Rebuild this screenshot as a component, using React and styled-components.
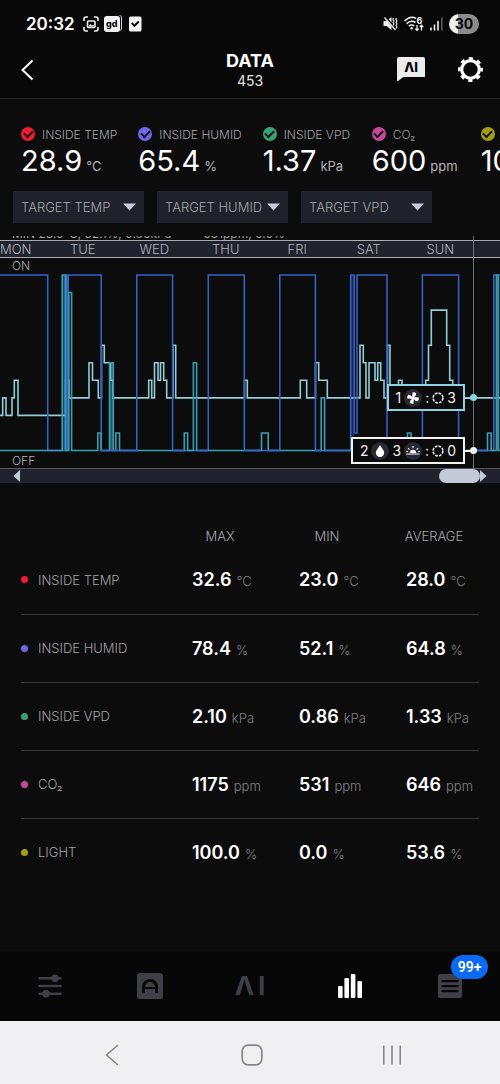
import React, { useState } from 'react';
import styled, { createGlobalStyle } from 'styled-components';

const GlobalStyle = createGlobalStyle`
  * {
    box-sizing: border-box;
  }

  body {
    margin: 0;
    background: #0c0c0c;
    color: #fff;
    font-family: Inter, 'Liberation Sans', sans-serif;
  }

  button, select {
    font-family: inherit;
    border: none;
    padding: 0;
    margin: 0;
    background: none;
    color: inherit;
    cursor: pointer;
  }
`;

const Page = styled.div`
  display: flex;
  flex-direction: column;
  min-height: 100vh;
  background: #0c0c0c;
  overflow: hidden;
`;

const Main = styled.main`
  flex: 1;
`;

/* ---------- status bar ---------- */

const StatusBar = styled.div`
  display: flex;
  justify-content: space-between;
  align-items: center;
  height: 47px;
  padding: 0 21px 0 26px;
  background: #080808;
`;

const StatusGroup = styled.div`
  display: flex;
  align-items: center;
  gap: ${props => props.$gap}px;
`;

const Clock = styled.span`
  font-size: 17px;
  font-weight: 600;
  margin-right: 3px;
`;

const AppBadge = styled.span`
  width: 16px;
  height: 16px;
  border-radius: 3px;
  background: #f4f4f4;
  color: #080808;
  font-size: 9px;
  font-weight: 800;
  line-height: 15px;
  text-align: center;
  box-shadow: 1px -1px 0 #080808, 2px -1px 0 #d0d0d0;
`;

const Battery = styled.span`
  width: 30px;
  height: 20px;
  border-radius: 10px;
  background: linear-gradient(90deg, #f0f0f0 30%, #8b8b8b 30%);
  color: #080808;
  font-size: 14px;
  font-weight: 700;
  line-height: 20px;
  text-align: center;
`;

/* ---------- header ---------- */

const Header = styled.header`
  display: grid;
  grid-template-columns: 1fr auto 1fr;
  align-items: center;
  height: 52px;
  padding: 0 16px 6px;
  background: #080808;
  border-bottom: 1px solid #262626;
`;

const IconButton = styled.button`
  display: flex;
  align-items: center;
`;

const BackButton = styled(IconButton)`
  padding-left: 4px;
`;

const TitleBlock = styled.div`
  text-align: center;
`;

const Title = styled.h1`
  margin: 0;
  font-size: 18px;
  font-weight: 700;
  line-height: 22px;
`;

const Subtitle = styled.div`
  font-size: 14px;
  line-height: 18px;
  color: #e4e4e4;
`;

const HeaderActions = styled.div`
  display: flex;
  justify-content: flex-end;
  align-items: center;
  gap: 32px;
`;

const ChatBubble = styled.span`
  width: 28px;
  height: 25px;
  padding-bottom: 5px;
  background: #ececec;
  border-radius: 2px;
  clip-path: polygon(0 0, 100% 0, 100% 80%, 22% 80%, 0 100%);
  color: #080808;
  font-size: 13px;
  font-weight: 800;
  line-height: 20px;
  text-align: center;
`;

/* ---------- sensors ---------- */

const SensorList = styled.div`
  display: flex;
  gap: 21px;
  padding: 26px 0 0 21px;
  overflow: hidden;
`;

const Sensor = styled.div`
  flex: none;
  min-width: 88px;
`;

const SensorLabel = styled.label`
  display: flex;
  align-items: center;
  gap: 7px;
  height: 18px;
  color: #a2a2a8;
  font-size: 12px;
  font-weight: 300;
`;

const SensorCheck = styled.input`
  appearance: none;
  display: grid;
  place-items: center;
  width: 14px;
  height: 14px;
  margin: 0;
  border-radius: 50%;
  background: ${props => props.$color};

  &:checked::after {
    content: '';
    width: 7px;
    height: 4px;
    margin-bottom: 2px;
    border: solid #141414;
    border-width: 0 0 2px 2px;
    transform: rotate(-45deg);
  }
`;

const SensorValue = styled.div`
  display: flex;
  align-items: baseline;
  gap: 4px;
  height: 36px;
  font-size: 29px;
  font-weight: 400;
  line-height: 36px;
`;

const SensorUnit = styled.span`
  font-size: 13px;
  line-height: 16px;
  color: #b4b4b8;
`;

const Filters = styled.div`
  display: flex;
  gap: 13px;
  padding: 12px 13px 13px;
`;

const FilterBox = styled.div`
  display: grid;
  grid-template-columns: 1fr 13px;
  align-items: center;
  width: 131px;
  height: 32px;
  padding-right: 8px;
  background: #1f212b;
`;

const FilterSelect = styled.select`
  appearance: none;
  grid-area: 1 / 1 / 2 / 3;
  height: 32px;
  padding: 0 0 0 8px;
  font-size: 13px;
  font-weight: 300;
  color: #a6a6ac;
  outline: none;
`;

const Caret = styled.svg`
  grid-area: 1 / 2 / 2 / 3;
  pointer-events: none;
`;

/* ---------- chart ---------- */

const ChartPanel = styled.section`
  position: relative;
`;

const SummaryStrip = styled.div`
  display: flex;
  align-items: flex-end;
  gap: 32px;
  height: 4px;
  padding-left: 12px;
  overflow: hidden;
  font-size: 12px;
  line-height: 13px;
  color: #a0a0a0;
  white-space: nowrap;
`;

const DayRow = styled.div`
  display: grid;
  grid-template-columns: 94fr repeat(6, 143fr) 48fr;
  height: 18px;
  border: solid #a9abb3;
  border-width: 1px 0;
  background: #20222d;
  color: #b4b5bc;
  font-size: 13px;
  font-weight: 300;
  line-height: 16px;
  text-align: center;

  span:first-child {
    text-align: left;
  }
`;

const Plot = styled.div`
  display: grid;
  height: 210px;
`;

const PlotSvg = styled.svg`
  grid-area: 1 / 1;
  width: 100%;
  height: 210px;
`;

const PlotScale = styled.div`
  grid-area: 1 / 1;
  display: flex;
  flex-direction: column;
  justify-content: space-between;
  padding-left: 12px;
  color: #b4b4b4;
  font-size: 12px;
  font-weight: 300;
  line-height: 15px;
`;

const Cursor = styled.div`
  position: absolute;
  top: 0;
  bottom: 14px;
  right: 26px;
  width: 1px;
  background: #6f7075;
`;

const Readout = styled.div`
  position: absolute;
  top: ${props => props.$top}px;
  right: -3px;
  display: flex;
  align-items: center;
  color: ${props => props.$color};

  /* lead line to the cursor */
  &::after {
    content: '';
    order: 1;
    width: 5px;
    height: 2px;
    background: currentColor;
  }
`;

const ReadoutBox = styled.div`
  display: flex;
  align-items: center;
  gap: 3px;
  height: 27px;
  padding: 0 7px;
  border: 2px solid currentColor;
  background: #0b0b0b;

  span {
    color: #f2f2f2;
    font-size: 14px;
  }
`;

const ReadoutDot = styled.i`
  order: 2;
  width: 7px;
  height: 7px;
  border-radius: 50%;
  background: currentColor;
`;

const Track = styled.div`
  display: flex;
  align-items: center;
  justify-content: space-between;
  height: 15px;
  padding: 0 13px;
  border-top: 1px solid #55565b;
  background: #20222d;
`;

const ThumbGroup = styled.div`
  display: flex;
  align-items: center;
`;

const Thumb = styled.div`
  width: 41px;
  height: 14px;
  border-radius: 7px;
  background: #c3cbd9;
`;

/* ---------- statistics ---------- */

const StatsWrap = styled.section`
  padding: 43px 21px 0;
`;

const StatsTable = styled.table`
  width: 100%;
  table-layout: fixed;
  border-collapse: collapse;

  tbody tr {
    height: 68px;
  }

  tbody tr + tr {
    border-top: 1px solid #363636;
  }
`;

const StatCol = styled.col`
  width: ${props => props.$width}px;
`;

const StatHead = styled.th`
  height: 20px;
  padding: 0;
  color: #a8a8ac;
  font-size: 13px;
  font-weight: 300;
  line-height: 20px;
  text-align: left;

  span {
    display: inline-block;
    width: 68px;
    text-align: center;
  }
`;

const StatName = styled.th`
  padding: 0;
  color: #a2a2a6;
  font-size: 13px;
  font-weight: 300;
  text-align: left;
`;

const StatLabel = styled.div`
  display: flex;
  align-items: center;
  gap: 10px;

  &::before {
    content: '';
    width: 7px;
    height: 7px;
    border-radius: 50%;
    background: ${props => props.$color};
  }
`;

const StatCell = styled.td`
  padding: 0 0 0 6px;
  font-size: 18px;
  font-weight: 600;
  white-space: nowrap;
`;

const StatUnit = styled.span`
  margin-left: 5px;
  color: #828286;
  font-size: 13px;
  font-weight: 300;
`;

/* ---------- bottom bars ---------- */

const TabBar = styled.nav`
  display: grid;
  grid-template-columns: repeat(5, 1fr);
  height: 70px;
  background: #070707;
`;

const Tab = styled.button`
  display: flex;
  align-items: center;
  justify-content: center;
  color: ${props => (props.$active ? '#fff' : '#3f3f47')};
`;

const AutoIcon = styled.span`
  display: grid;
  place-items: center;
  width: 26px;
  height: 26px;
  border-radius: 3px;
  background: currentColor;
`;

/* arch with a cross bar */
const Arch = styled.span`
  width: 16px;
  height: 14px;
  padding-top: 5px;
  border: 3px solid #070707;
  border-bottom: none;
  border-radius: 8px 8px 0 0;

  &::after {
    content: '';
    display: block;
    height: 2px;
    background: #070707;
  }
`;

const AiMark = styled.span`
  display: flex;
  gap: 4px;
  font-size: 26px;
  font-weight: 700;
  line-height: 26px;
`;

const BadgeHolder = styled.span`
  position: relative;
  display: flex;
`;

const Badge = styled.span`
  position: absolute;
  left: 13px;
  bottom: 19px;
  width: 37px;
  height: 24px;
  border-radius: 12px;
  background: #0a69f5;
  color: #fff;
  font-family: Roboto, sans-serif;
  font-size: 14px;
  font-weight: 600;
  line-height: 24px;
  text-align: center;
`;

const SystemNav = styled.nav`
  display: grid;
  grid-template-columns: repeat(3, 1fr);
  height: 63px;
  padding: 4px 38px 0 42px;
  background: #f0f0f2;
  color: #87878a;
`;

const SystemButton = styled.button`
  display: flex;
  align-items: center;
  justify-content: center;
`;

const sensors = [
  { name: 'INSIDE TEMP', value: '28.9', unit: '°C', color: '#ee1c2e', max: '32.6', min: '23.0', avg: '28.0' },
  { name: 'INSIDE HUMID', value: '65.4', unit: '%', color: '#6f66e8', max: '78.4', min: '52.1', avg: '64.8' },
  { name: 'INSIDE VPD', value: '1.37', unit: 'kPa', color: '#38a078', max: '2.10', min: '0.86', avg: '1.33' },
  { name: 'CO₂', value: '600', unit: 'ppm', color: '#c4489a', max: '1175', min: '531', avg: '646' },
  { name: 'LIGHT', value: '100.0', unit: '%', color: '#a29d16', max: '100.0', min: '0.0', avg: '53.6' },
];

const filters = ['TARGET TEMP', 'TARGET HUMID', 'TARGET VPD'];

const days = ['MON', 'TUE', 'WED', 'THU', 'FRI', 'SAT', 'SUN'];

// [x where the level starts, level 0-10]
const fanSteps = [
  [0, 2], [2.7, 3], [6, 2], [12, 3], [14.3, 4], [18, 2], [65.5, 4], [69, 3],
  [89, 5], [92.5, 4], [98.3, 3], [101.5, 6], [104.3, 5], [110.5, 4], [113, 3],
  [148.7, 4], [151.7, 3], [154.5, 5], [158, 4], [160.5, 5], [163.7, 4], [166.7, 3],
  [173, 6], [175.7, 3], [244.5, 4], [247.3, 3], [300.3, 4], [306.7, 3],
  [315.5, 5], [318.7, 4], [327.3, 3], [360, 6], [363.3, 5], [366, 3], [369, 5],
  [375, 4], [377.7, 5], [380.7, 4], [384, 3], [387.5, 6], [390, 3], [398.5, 4],
  [402, 3], [425.7, 4], [428.5, 6], [431.3, 8], [446.7, 6], [449.7, 4], [452.7, 3],
];

const mistSteps = [
  [0, 0], [62.2, 10], [65.5, 0], [68.8, 9], [71.6, 0], [97.8, 1], [101, 0],
  [109.5, 5], [113.3, 0], [115.8, 1], [119.5, 0], [184.3, 1], [187.6, 0],
  [193.4, 5], [196.6, 0], [261.5, 1], [268.2, 0], [321.2, 3], [324.6, 0],
  [407.5, 1], [411, 0], [487.5, 1], [491.2, 0], [496.4, 10], [498.4, 0],
];

const lightSteps = [
  [0, 10], [47.7, 0], [65.5, 10], [66.6, 0], [68.2, 10], [101.2, 0], [136.8, 10],
  [172.6, 0], [208.3, 10], [244.3, 0], [279.8, 10], [315.4, 0], [350.7, 10],
  [354.2, 1], [357, 10], [387, 0], [422.4, 10], [458.6, 0], [493.8, 10],
];

const toPath = steps =>
  steps
    .map(([x, level], i) => {
      const y = 192.5 - level * 17.55;
      return i === 0 ? `M${x} ${y}` : `H${x}V${y}`;
    })
    .join('') + 'H502';

const FanIcon = () => (
  <svg width="18" height="18" viewBox="0 0 18 18">
    <circle cx="9" cy="9" r="9" fill="#272832" />
    <g fill="#fff">
      {[0, 90, 180, 270].map(angle => (
        <path key={angle} d="M8.2 9.8L7.6 3.4Q9.4 2.6 11.4 3.8Q11.6 6.4 9.8 8.2Z" transform={`rotate(${angle + 10} 9 9)`} />
      ))}
    </g>
  </svg>
);

const DropIcon = () => (
  <svg width="18" height="18" viewBox="0 0 18 18">
    <circle cx="9" cy="9" r="9" fill="#272832" />
    <path d="M9 3C10.2 5.6 13.2 8.2 13.2 10.8A4.2 4.2 0 0 1 4.8 10.8C4.8 8.2 7.8 5.6 9 3Z" fill="#fff" />
  </svg>
);

const SunriseIcon = () => (
  <svg width="18" height="18" viewBox="0 0 18 18">
    <circle cx="9" cy="9" r="9" fill="#272832" />
    <path d="M5.8 11A3.2 3.2 0 0 1 12.2 11Z" fill="#fff" />
    <path d="M2.5 12H15.5M9 6.2V4M5.4 7.6L4 6.2M12.6 7.6L14 6.2M3.8 9.8L2 9.3M14.2 9.8L16 9.3" stroke="#fff" strokeWidth="1.1" />
  </svg>
);

const DialIcon = () => (
  <svg width="12" height="12" viewBox="0 0 12 12">
    <circle cx="6" cy="6" r="4.9" fill="none" stroke="#eee" strokeWidth="1.6" strokeDasharray="2.7 1.148" />
  </svg>
);

const GearIcon = () => (
  <svg width="27" height="27" viewBox="0 0 27 27" fill="none" stroke="#fff">
    <circle cx="13.5" cy="13.5" r="8.8" strokeWidth="3.2" />
    <circle cx="13.5" cy="13.5" r="11.1" strokeWidth="2.6" strokeDasharray="4.2 4.518" strokeDashoffset="2.1" />
  </svg>
);

function App() {
  const [enabled, setEnabled] = useState(sensors.map(() => true));

  const toggle = index => {
    setEnabled(enabled.map((on, i) => (i === index ? !on : on)));
  };

  return (
    <Page>
      <GlobalStyle />

      <StatusBar>
        <StatusGroup $gap={5}>
          <Clock>20:32</Clock>
          <svg width="16" height="16" viewBox="0 0 16 16" fill="none" stroke="#eee" strokeWidth="1.6">
            <path d="M1 5V3Q1 1 3 1H5M11 1H13Q15 1 15 3V5M15 11V13Q15 15 13 15H11M5 15H3Q1 15 1 13V11" />
            <rect x="4.5" y="5" width="7.5" height="6.5" rx="1" />
            <path d="M5 10.5L7.5 8L9 9.5L10 8.8L12 10.5Z" fill="#eee" stroke="none" />
          </svg>
          <AppBadge>gd</AppBadge>
          <svg width="20" height="16" viewBox="0 0 20 16">
            <rect x="4" y="0.5" width="12.5" height="15" rx="1.5" fill="#f4f4f4" />
            <path d="M6.8 7L9.4 9.8L13.8 5.5" fill="none" stroke="#080808" strokeWidth="1.9" />
          </svg>
        </StatusGroup>
        <StatusGroup $gap={6}>
          <svg width="15" height="15" viewBox="0 0 15 15">
            <path d="M0.5 5H3.5L8.5 1V14L3.5 10H0.5Z" fill="#f0f0f0" />
            <path d="M1.5 0.5L13 13.5" stroke="#080808" strokeWidth="2.6" />
            <path d="M1.5 1.5L12.5 14" stroke="#f0f0f0" strokeWidth="1.3" />
            <path d="M10.5 2L9.8 3.5L11 5L10 6.5L11 8L10 9.5M13.5 2L12.8 3.5L14 5L13 6.5L14 8L13 9.5L14 11L13 12.5" fill="none" stroke="#f0f0f0" strokeWidth="1.1" />
          </svg>
          <svg width="20" height="16" viewBox="0 0 20 16" fill="none" stroke="#f0f0f0" strokeWidth="1.5">
            <path d="M0.5 5Q6.5 -1 12 2.5M2.6 7.6Q7 3.6 11.5 6.5M4.8 10.2Q7.5 8 10.3 10" />
            <circle cx="7.6" cy="12.2" r="1.2" fill="#f0f0f0" stroke="none" />
            <path d="M13 9V14M11.3 12.6L13 14.4L14.7 12.6M17.5 14.6V9.6M15.8 11L17.5 9.2L19.2 11" strokeWidth="1.3" />
            <text x="12.4" y="8" fill="#f0f0f0" stroke="none" fontSize="9" fontWeight="700">6</text>
          </svg>
          <svg width="13" height="14" viewBox="0 0 13 14">
            <path d="M1 10.5V13.5M4.5 7.5V13.5M8 4V13.5" stroke="#f0f0f0" strokeWidth="1.6" />
            <path d="M11.8 0.5V13.5" stroke="#5a5a5a" strokeWidth="1.6" />
          </svg>
          <Battery>30</Battery>
        </StatusGroup>
      </StatusBar>

      <Header>
        <BackButton aria-label="Back">
          <svg width="14" height="22" viewBox="0 0 14 22" fill="none" stroke="#fff" strokeWidth="2">
            <path d="M12.5 1.5L2.5 11L12.5 20.5" />
          </svg>
        </BackButton>
        <TitleBlock>
          <Title>DATA</Title>
          <Subtitle>453</Subtitle>
        </TitleBlock>
        <HeaderActions>
          <IconButton>
            <ChatBubble>ΛI</ChatBubble>
          </IconButton>
          <IconButton aria-label="Settings">
            <GearIcon />
          </IconButton>
        </HeaderActions>
      </Header>

      <Main>
        <SensorList>
          {sensors.map((sensor, i) => (
            <Sensor key={sensor.name}>
              <SensorLabel>
                <SensorCheck type="checkbox" $color={sensor.color} checked={enabled[i]} onChange={() => toggle(i)} />
                {sensor.name}
              </SensorLabel>
              <SensorValue>
                {sensor.value}
                <SensorUnit>{sensor.unit}</SensorUnit>
              </SensorValue>
            </Sensor>
          ))}
        </SensorList>

        <Filters>
          {filters.map(name => (
            <FilterBox key={name}>
              <FilterSelect aria-label={name}>
                <option>{name}</option>
              </FilterSelect>
              <Caret width="13" height="8" viewBox="0 0 13 8">
                <path d="M0 0.5H13L6.5 7.5Z" fill="#c9cbdc" />
              </Caret>
            </FilterBox>
          ))}
        </Filters>

        <ChartPanel>
          <SummaryStrip>
            <span>MIN 23.0°C, 52.1%, 0.86kPa</span>
            <span>531ppm, 0.0%</span>
          </SummaryStrip>
          <DayRow>
            {days.map(day => (
              <span key={day}>{day}</span>
            ))}
          </DayRow>
          <Plot>
            <PlotSvg viewBox="0 0 500 210" preserveAspectRatio="none" fill="none" strokeWidth="1.6">
              <rect x="62.2" y="17" width="3.3" height="175" fill="#174a55" />
              <rect x="65.5" y="122" width="2.7" height="70" fill="#1f4f9c" />
              <rect x="109.5" y="105" width="3.8" height="87" fill="#1c5a68" />
              <rect x="350.7" y="17" width="3.5" height="175" fill="#14264d" />
              <rect x="496.4" y="17" width="2" height="175" fill="#1f6f80" />
              <path d={toPath(fanSteps)} stroke="#93ccd6" />
              <path d={toPath(lightSteps)} stroke="#3560c4" />
              <path d={toPath(mistSteps)} stroke="#3a9db2" />
              <path d="M101 192.5H137M172.6 192.5H184M197 192.5H208M244 192.5H261M268 192.5H280M315 192.5H321M325 192.5H351M473 192.5H487" stroke="#3560c4" />
            </PlotSvg>
            <PlotScale>
              <span>ON</span>
              <span>OFF</span>
            </PlotScale>
          </Plot>
          <Track>
            <svg width="7" height="12" viewBox="0 0 7 12">
              <path d="M7 0V12L0.5 6Z" fill="#c3cbd9" />
            </svg>
            <ThumbGroup>
              <Thumb />
              <svg width="7" height="12" viewBox="0 0 7 12">
                <path d="M0 0V12L6.5 6Z" fill="#c3cbd9" />
              </svg>
            </ThumbGroup>
          </Track>
          <Cursor>
            <Readout $top={148} $color="#8fd3e2">
              <ReadoutBox>
                <span>1</span>
                <FanIcon />
                <span>:</span>
                <DialIcon />
                <span>3</span>
              </ReadoutBox>
              <ReadoutDot />
            </Readout>
            <Readout $top={201} $color="#f4f4ee">
              <ReadoutBox>
                <span>2</span>
                <DropIcon />
                <span>3</span>
                <SunriseIcon />
                <span>:</span>
                <DialIcon />
                <span>0</span>
              </ReadoutBox>
              <ReadoutDot />
            </Readout>
          </Cursor>
        </ChartPanel>

        <StatsWrap>
          <StatsTable>
            <colgroup>
              <col />
              <StatCol $width={107} />
              <StatCol $width={107} />
              <StatCol $width={79} />
            </colgroup>
            <thead>
              <tr>
                <StatHead />
                <StatHead scope="col"><span>MAX</span></StatHead>
                <StatHead scope="col"><span>MIN</span></StatHead>
                <StatHead scope="col"><span>AVERAGE</span></StatHead>
              </tr>
            </thead>
            <tbody>
              {sensors.map(sensor => (
                <tr key={sensor.name}>
                  <StatName scope="row">
                    <StatLabel $color={sensor.color}>{sensor.name}</StatLabel>
                  </StatName>
                  {[sensor.max, sensor.min, sensor.avg].map((value, i) => (
                    <StatCell key={i}>
                      {value}
                      <StatUnit>{sensor.unit}</StatUnit>
                    </StatCell>
                  ))}
                </tr>
              ))}
            </tbody>
          </StatsTable>
        </StatsWrap>
      </Main>

      <TabBar>
        <Tab aria-label="Controls">
          <svg width="24" height="24" viewBox="0 0 24 24" stroke="currentColor" strokeWidth="2.6" strokeLinecap="round">
            <path d="M1.5 4.2H22.5M1.5 12H22.5M1.5 19.8H22.5" />
            <circle cx="17" cy="4.2" r="3" fill="currentColor" strokeWidth="1.6" />
            <circle cx="8" cy="19.8" r="3" fill="currentColor" strokeWidth="1.6" />
          </svg>
        </Tab>
        <Tab aria-label="Automation">
          <AutoIcon>
            <Arch />
          </AutoIcon>
        </Tab>
        <Tab>
          <AiMark>
            <span>Λ</span>
            <span>I</span>
          </AiMark>
        </Tab>
        <Tab $active aria-label="Data">
          <svg width="26" height="26" viewBox="0 0 26 26" fill="currentColor">
            <rect x="1" y="13" width="4.6" height="12" rx="1" />
            <rect x="7.4" y="5" width="4.6" height="20" rx="1" />
            <rect x="13.8" y="1" width="4.6" height="24" rx="1" />
            <rect x="20.4" y="8" width="4.6" height="17" rx="1" />
          </svg>
        </Tab>
        <Tab aria-label="Logs">
          <BadgeHolder>
            <svg width="24" height="24" viewBox="0 0 24 24">
              <rect width="24" height="24" rx="2" fill="currentColor" />
              <path d="M4.5 7.2H19.5M4.5 12.2H19.5M4.5 17.2H19.5" stroke="#070707" strokeWidth="2.2" strokeLinecap="round" />
            </svg>
            <Badge>99+</Badge>
          </BadgeHolder>
        </Tab>
      </TabBar>

      <SystemNav>
        <SystemButton aria-label="Back">
          <svg width="14" height="22" viewBox="0 0 14 22" fill="none" stroke="currentColor" strokeWidth="1.6">
            <path d="M13 1L1.5 11L13 21" />
          </svg>
        </SystemButton>
        <SystemButton aria-label="Home">
          <svg width="22" height="22" viewBox="0 0 22 22" fill="none" stroke="currentColor" strokeWidth="1.7">
            <rect x="1.2" y="1.2" width="19.6" height="19.6" rx="6" />
          </svg>
        </SystemButton>
        <SystemButton aria-label="Recent apps">
          <svg width="20" height="20" viewBox="0 0 20 20" stroke="currentColor" strokeWidth="1.6">
            <path d="M1.8 0.5V19.5M10 0.5V19.5M18.2 0.5V19.5" />
          </svg>
        </SystemButton>
      </SystemNav>
    </Page>
  );
}

export default App;
